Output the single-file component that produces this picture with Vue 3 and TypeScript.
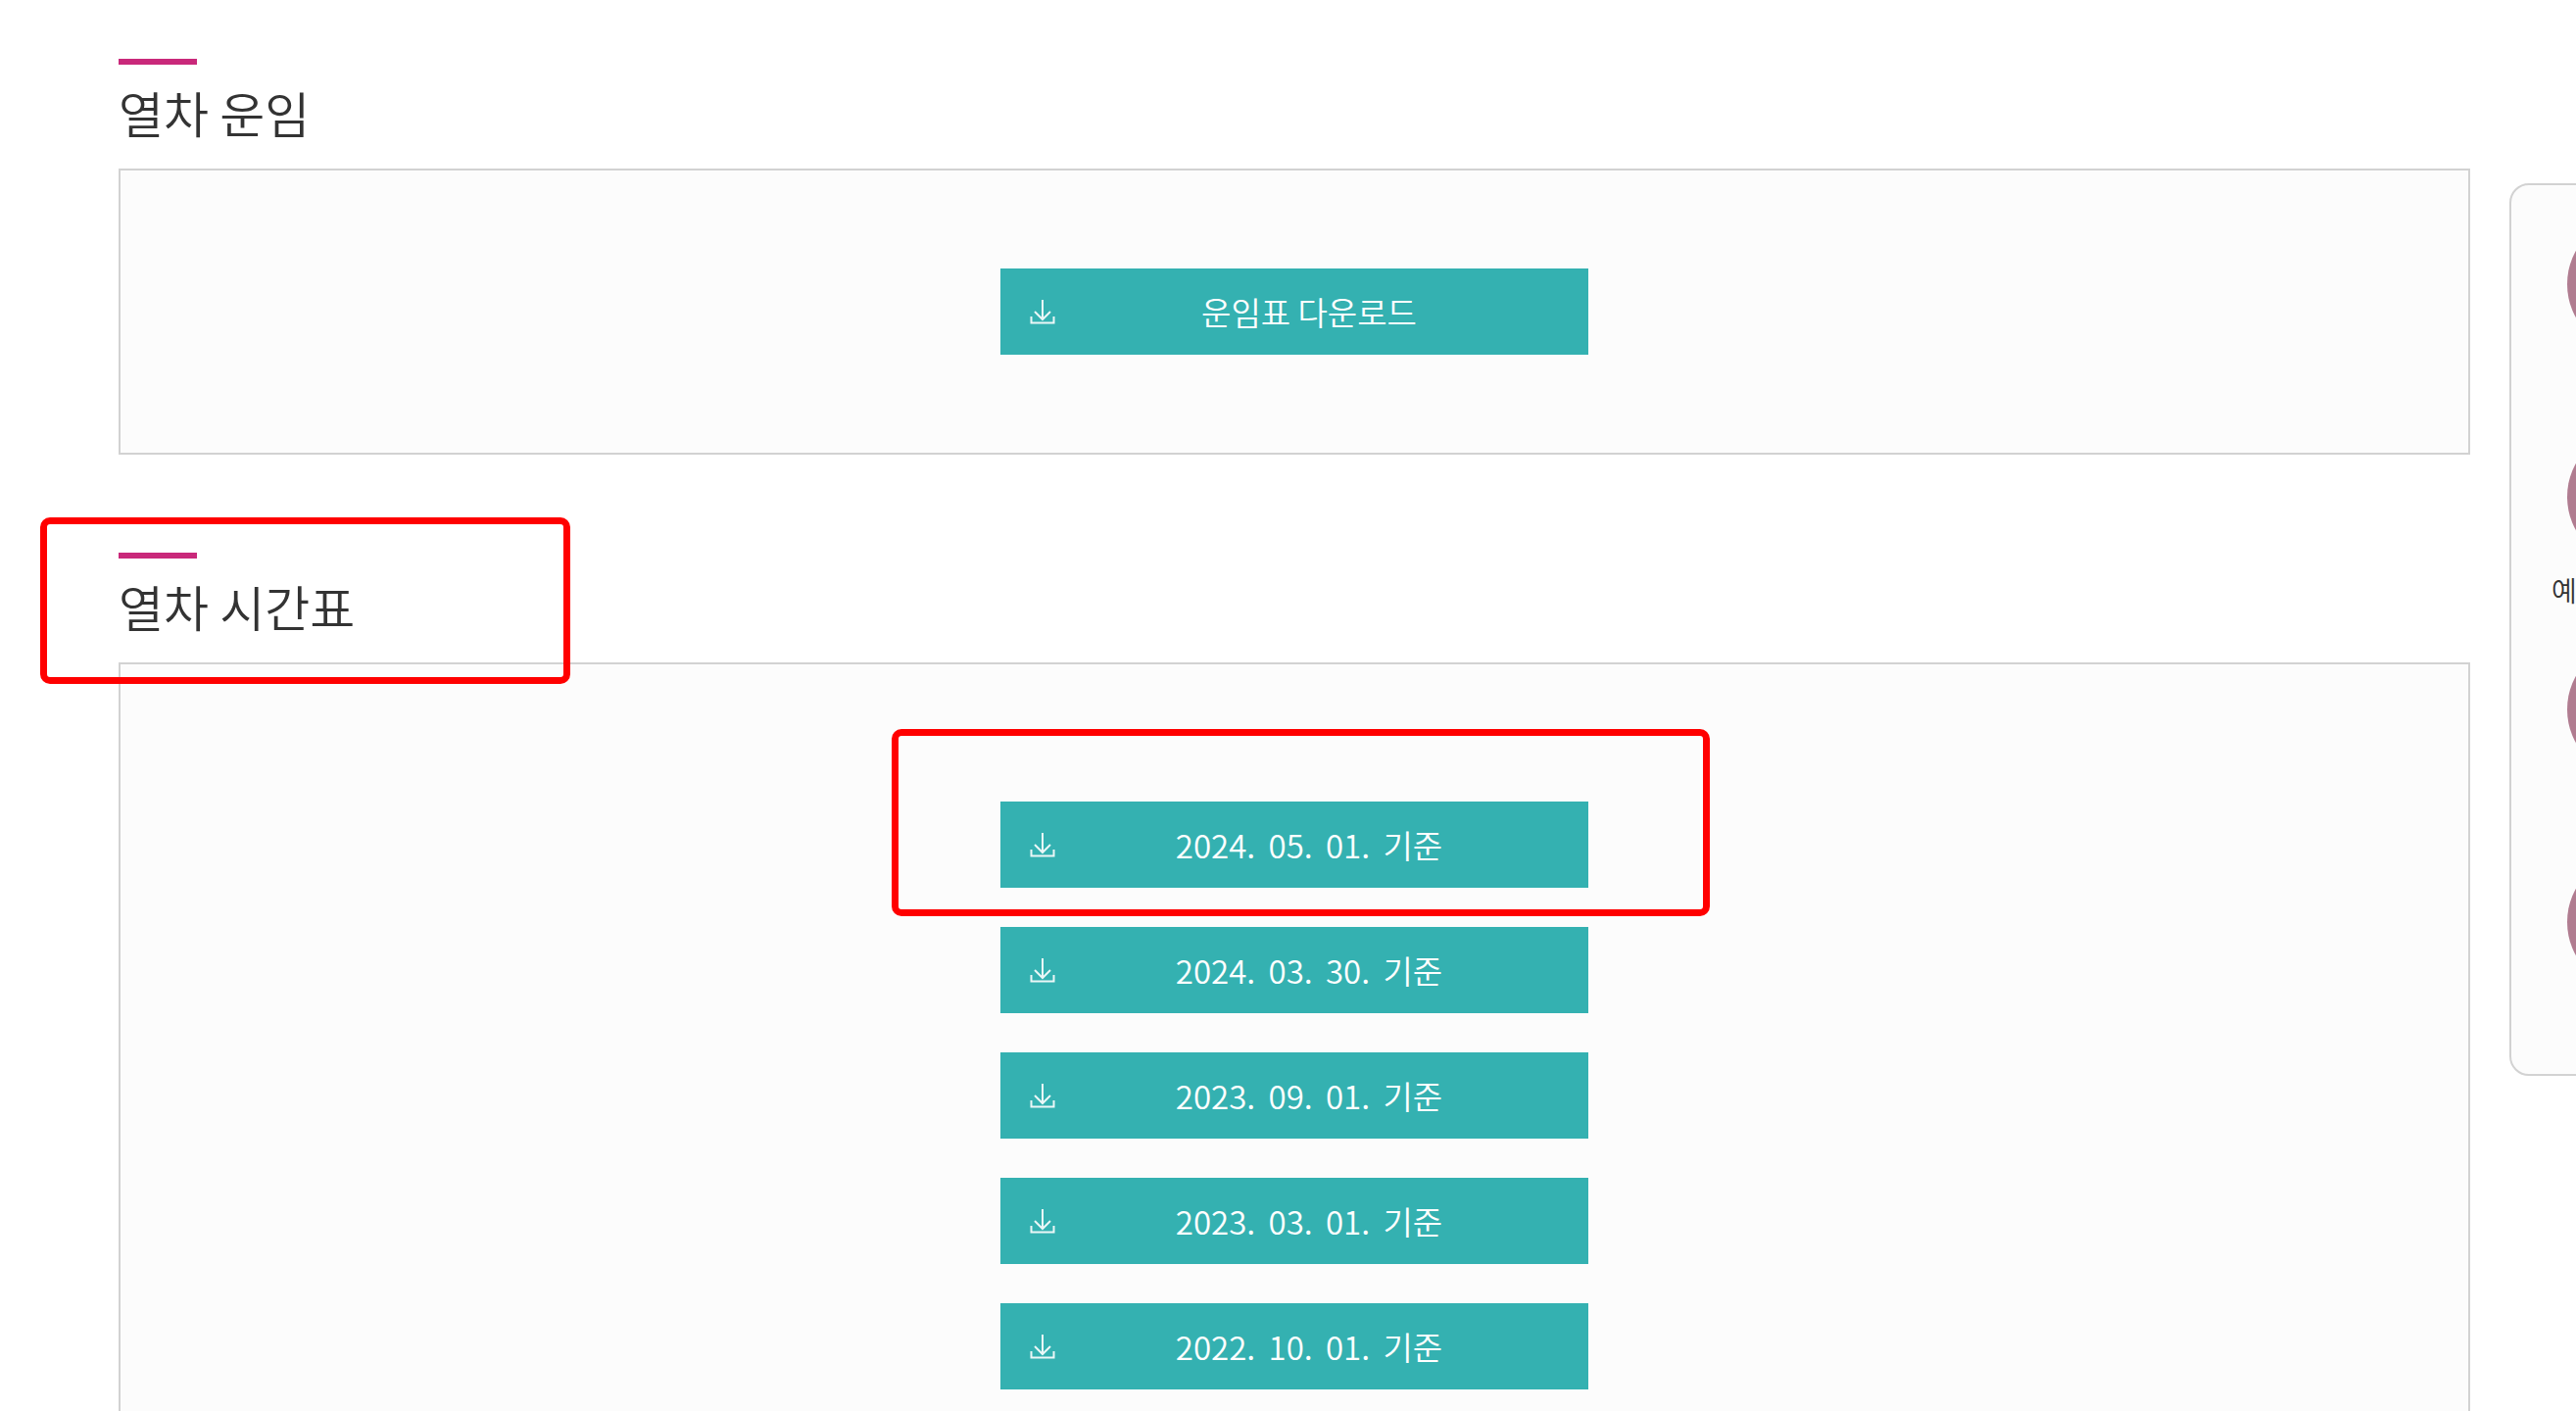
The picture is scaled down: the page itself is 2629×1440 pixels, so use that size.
<script setup lang="ts">
const timetables = [
  '2024. 05. 01. 기준',
  '2024. 03. 30. 기준',
  '2023. 09. 01. 기준',
  '2023. 03. 01. 기준',
  '2022. 10. 01. 기준',
]

const sideItems = [
  { id: 1, label: '' },
  { id: 2, label: '예' },
  { id: 3, label: '' },
  { id: 4, label: '' },
]
</script>

<template>
  <div class="page">
    <main class="content">
      <section class="section">
        <header class="section-head">
          <span class="accent" />
          <h2 class="title">열차 운임</h2>
        </header>
        <div class="panel">
          <a class="btn">
            <svg class="btn-icon" viewBox="0 0 26 26" aria-hidden="true">
              <path d="M13 1V21M5 13l8 8 8-8M1.5 18v6.5h23V18" />
            </svg>
            <span class="btn-text">운임표 다운로드</span>
          </a>
        </div>
      </section>

      <section class="section">
        <header class="section-head">
          <span class="accent" />
          <h2 class="title">열차 시간표</h2>
        </header>
        <div class="panel panel--list">
          <a v-for="date in timetables" :key="date" class="btn">
            <svg class="btn-icon" viewBox="0 0 26 26" aria-hidden="true">
              <path d="M13 1V21M5 13l8 8 8-8M1.5 18v6.5h23V18" />
            </svg>
            <span class="btn-text btn-text--date">{{ date }}</span>
          </a>
        </div>
      </section>
    </main>

    <aside class="side">
      <div v-for="item in sideItems" :key="item.id" class="side-item">
        <span class="side-circle" />
        <span v-if="item.label" class="side-label">{{ item.label }}</span>
      </div>
    </aside>

    <!-- 강조 표시 -->
    <div class="mark mark--title" />
    <div class="mark mark--button" />
  </div>
</template>

<style scoped>
.page {
  position: relative;
  display: flex;
  align-items: flex-start;
  gap: 40px;
  width: 2629px;
  height: 1440px;
  padding: 60px 0 0 121px;
  box-sizing: border-box;
  overflow: hidden;
  background: #fff;
  font-family: "Noto Sans CJK KR", "Noto Sans", sans-serif;
}

.content {
  flex: 0 0 2400px;
  display: flex;
  flex-direction: column;
  gap: 100px;
}

.section-head {
  height: 112px;
}

.accent {
  display: block;
  width: 80px;
  height: 6px;
  background: #c9287a;
}

.title {
  margin: 13px 0 0;
  font-size: 50px;
  font-weight: 350;
  line-height: 70px;
  color: #333;
}

.panel {
  display: flex;
  flex-direction: column;
  align-items: center;
  gap: 40px;
  padding: 100px 0;
  background: #fcfcfc;
  border: 2px solid #d2d2d2;
}

.panel--list {
  padding-top: 140px;
}

.btn {
  display: flex;
  align-items: center;
  flex: none;
  width: 600px;
  height: 88px;
  padding: 0 26px 0 30px;
  box-sizing: border-box;
  background: #34b1b1;
  color: #fff;
}

.btn-icon {
  flex: none;
  width: 26px;
  height: 26px;
  fill: none;
  stroke: #fff;
  stroke-width: 2;
  opacity: 0.9;
}

.btn-text {
  flex: 1;
  text-align: center;
  font-size: 33px;
  font-weight: 350;
  line-height: 44px;
}

.btn-text--date {
  word-spacing: 6px;
}

.side {
  flex: none;
  width: 300px;
  margin-top: 127px;
  padding: 31px 0 8px 57px;
  box-sizing: border-box;
  background: #fcfcfc;
  border: 2px solid #d2d2d2;
  border-radius: 20px;
}

.side-item {
  display: flex;
  flex-direction: column;
  height: 217px;
}

.side-circle {
  flex: none;
  width: 140px;
  height: 140px;
  border-radius: 50%;
  background: #b07c90;
}

.side-label {
  margin: 6px 0 0 -16px;
  font-size: 28px;
  font-weight: 350;
  line-height: 38px;
  color: #333;
}

.mark {
  position: absolute;
  box-sizing: border-box;
  border: 7px solid #f00;
  border-radius: 10px;
}

.mark--title {
  left: 41px;
  top: 528px;
  width: 541px;
  height: 170px;
}

.mark--button {
  left: 910px;
  top: 744px;
  width: 835px;
  height: 191px;
}
</style>

<style>
html,
body {
  margin: 0;
  overflow: hidden;
}
</style>
